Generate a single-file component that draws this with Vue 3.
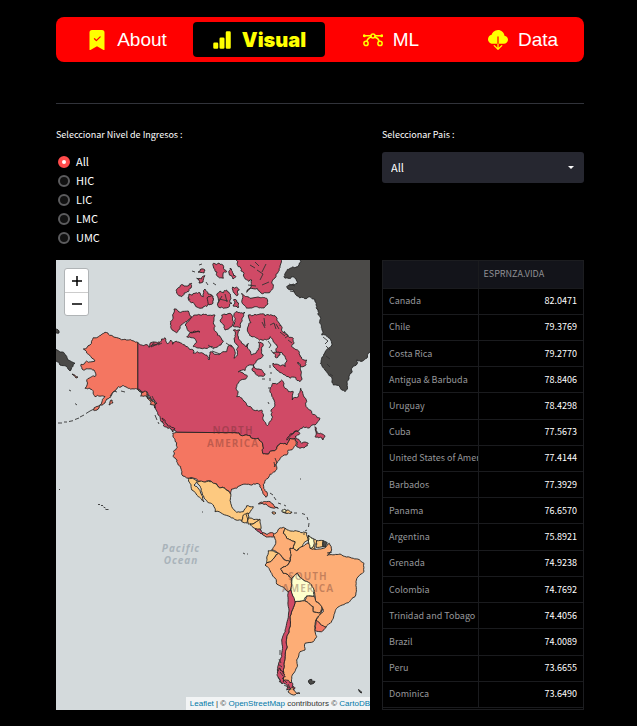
<script setup>
import { ref } from 'vue'

const tabs = [
  { id: 'about', label: 'About' },
  { id: 'visual', label: 'Visual' },
  { id: 'ml', label: 'ML' },
  { id: 'data', label: 'Data' },
]
const activeTab = ref('visual')

const incomes = ['All', 'HIC', 'LIC', 'LMC', 'UMC']
const income = ref('All')
const country = ref('All')

const rows = [
  ['Canada', '82.0471'],
  ['Chile', '79.3769'],
  ['Costa Rica', '79.2770'],
  ['Antigua & Barbuda', '78.8406'],
  ['Uruguay', '78.4298'],
  ['Cuba', '77.5673'],
  ['United States of America', '77.4144'],
  ['Barbados', '77.3929'],
  ['Panama', '76.6570'],
  ['Argentina', '75.8921'],
  ['Grenada', '74.9238'],
  ['Colombia', '74.7692'],
  ['Trinidad and Tobago', '74.4056'],
  ['Brazil', '74.0089'],
  ['Peru', '73.6655'],
  ['Dominica', '73.6490'],
]

// Deterministic noise in -1..1, equal for both directions of one edge.
function noise(x, y) {
  const v = Math.sin(x * 12.9898 + y * 78.233) * 43758.5453
  return (v - Math.floor(v)) * 2 - 1
}

// Splits an edge by midpoint displacement so that coasts look natural.
function split(a, b, rough, out) {
  const dx = b[0] - a[0]
  const dy = b[1] - a[1]
  const len = Math.hypot(dx, dy)
  if (len < 2.2 || len > 40 || rough === 0) {
    out.push(b)
    return
  }
  const dir = a[0] < b[0] || (a[0] === b[0] && a[1] < b[1]) ? 1 : -1
  const k = noise(a[0] + b[0], a[1] + b[1]) * rough * dir
  const m = [(a[0] + b[0]) / 2 - dy * k, (a[1] + b[1]) / 2 + dx * k]
  split(a, m, rough, out)
  split(m, b, rough, out)
}

function outline(text, rough) {
  const pts = text.split(' ').map((p) => p.split(',').map(Number))
  const out = [pts[0]]
  pts.forEach((p, i) => split(p, pts[(i + 1) % pts.length], rough, out))
  return 'M' + out.map((p) => p[0].toFixed(1) + ' ' + p[1].toFixed(1)).join('L') + 'Z'
}

const shapes = [
  // Greenland and the far east of Russia
  ['none', 0.24, '300.7,258 372,258 372,350 366.7,358.3 351.7,368.3 349,379 345,391.7 333.3,385 325,370 325,351.7 331.7,343.3 321.7,335 318.3,315 310,296.7 296.7,295.7 286.7,286.7 297.3,283.3 284,276.7 290,268.3 299,265'],
  ['none', 0.2, '54,346 62,352 68,360 75,363.3 70,371 60,365 54,359'],
  ['none', 0.2, '54,329 59,331 59,333 54,333'],
  // Canada
  ['top', 0.22, '137.7,342.3 141.7,345 149,347.3 150,343.3 160,342.3 165,337.7 167.3,343.7 170.7,340 172.7,344.3 176,341 181.7,343.3 187.3,346.7 193.3,350 193.3,353.3 201.7,352.7 206.7,355 209,360 210,352 220,354 226.7,351.7 230,345 235,351.7 234,358.3 238.3,346.7 233.3,330 240,330 241.7,343.3 246,347 248.3,343.3 251.7,355 256.7,351.7 258.3,342.3 263.3,345 263.3,355 258.3,359 255,363.3 249.3,365 238.3,372 247.3,375.7 240.7,380 236.7,386.7 236.7,396.7 245,401.7 250.7,406.7 261.7,410 263.3,420 267.3,425.7 271.7,420 271,410 275,405 271.7,395 272.7,383.3 281.7,380 285,388.3 293.3,391.7 292.3,400 298.3,396.7 300.7,388.3 306.7,401.7 311.7,411.7 320,418.3 315,425 303.3,426.7 293.3,433.3 286.7,440 296.7,431 300,433.3 295,436.7 301.7,443.3 308.3,443.3 300,448.3 296.7,446.7 295,438.3 290,438.3 286.7,445 278.3,445 271.7,451 263.3,454 262.7,445 258.3,438.3 246.7,435 236,432.7 176.7,432.3 173.3,428.3 166,425 160,416.7 155,408 156.7,403.3 146.7,391.7 137.7,389.3'],
  ['top', 0.2, '174,309 188.3,311 191.7,316.7 183.3,323.3 176.7,332.7 170.7,326.7 173,317'],
  ['top', 0.22, '191.7,317.7 203,314 215,315 215,326.7 223.3,341.7 210,346.7 198,348 193.3,346.7 196.7,342.3 186.7,336.7 200,332 188.3,331 185,325'],
  ['top', 0.3, '176.7,293.3 183.3,285 191.7,283.3 188.3,291.7 181.7,296.7'],
  ['top', 0.3, '189,294 195,293.3 203.3,296.7 205,289 208,294 213.3,298.3 208,304 200,308.3 190,301.7'],
  ['top', 0.3, '196.7,278.3 205,275.7 203,282 199,283'],
  ['top', 0.3, '198,272 201,269 205,270 204,273'],
  ['top', 0.3, '213.3,263.3 219,263 226.7,271.7 223.3,278.3 217,272'],
  ['top', 0.3, '230,268.3 236,276.7 233,279 229,273'],
  ['top', 0.3, '235,258 283,258 280,266 278.3,271.7 275,278 271.7,283.3 271.7,290 260,291.7 246.7,292.3 251.7,280 243.3,275 238.3,266.7'],
  ['top', 0.14, '241.7,293.3 250,298.3 258,297 266.7,298.3 268,304 264,308 246.7,308.3 241.7,301.7'],
  ['top', 0.35, '216.7,295 220,291 226.7,290 230,300 223.3,308.3 218,303'],
  ['top', 0.3, '232.7,287 239.3,290 238,295 234,293'],
  ['top', 0.3, '233.3,300 238.5,303 238,308 233,306'],
  ['top', 0.3, '207,298 213,296 213,303 209,305'],
  ['top', 0.25, '221.7,315 230,313.3 232.5,320 231.7,326.7 225,330 220,321'],
  ['top', 0.2, '236,311.7 245,312.3 241.7,321.7 240,328 233,326 235,321.7'],
  ['top', 0.28, '248.3,315 255,314.3 265,316 268,314.5 276.7,320 281.7,326.7 293.3,338.3 291.7,346.7 299,354 306.7,360 301.7,366.7 298,362 301,371 300,381.7 290,378.3 276.7,370 273,363 285,366.7 283.3,355 275,343.3 270,336.7 262,340 253.3,336.7 247.3,330'],
  ['top', 0.25, '253.3,365 259,369 265,375 256.7,375 252,370'],
  ['top', 0.3, '273,353 279,352 280,355 275,357'],
  ['top', 0.25, '315,426.7 317,433 325,436.7 323,440 315,436.7'],
  ['top', 0.3, '162,418 167,424 175,429 173,432 166,427'],
  // United States
  ['high', 0.22, '137.7,342.3 128.3,340 115,337.3 105,332.3 93.3,337.7 90,345 83.3,349 89.3,355 95,361 86.7,361 81,364.3 83.3,370 94,370 95,376.7 86.7,381 85,388.3 93.3,391.7 95,396.7 105,396.7 100,405 93.3,410 98,409 105,403 111.7,395 118.3,386.7 128.3,388.3 137.7,389.3'],
  ['high', 0.3, '137.7,389.3 146.7,391.7 156.7,403.3 155,408 148,399'],
  ['high', 0.22, '176.7,432.3 236,432.7 246.7,435 258.3,438.3 262.7,445 263.3,454 271.7,451 278.3,445 286.7,445 290,438.3 295,438.3 296,445 288.3,450 286.7,455 280,458.3 276.7,466.7 275,471.7 266.7,479 263.3,484.3 266.7,491.7 266,497.3 262.7,491.7 260,485 246.7,484.3 240,485.7 231.7,489 230.7,494.3 225,488.3 219.3,487.7 211.7,481.7 198.3,481.7 188.3,478.3 181.7,474.3 178.3,465 173.3,456.7 174.3,438.3 172.7,433.3'],
  ['high', 0.3, '110,402 112,400 113,403 109,405'],
  ['high', 0.3, '72,374 78,377 76,378'],
  // Caribbean
  ['high', 0.2, '258.3,504 266.7,501.7 273,504 278.3,508.3 273,508 266,504'],
  ['gold', 0.2, '287,510 292,512 287,513.5 283,512'],
  ['pale', 0.2, '282,510 285,509 286,512.5 282,512'],
  ['mid', 0.2, '272,512 276,513 273,514'],
  // Mexico and Central America
  ['gold', 0.14, '188.3,478.3 198.3,481.7 211.7,481.7 219.3,487.7 225,488.3 230.7,494.3 231.7,506.7 236.7,512.3 243.3,511.7 246.7,505.7 253.3,506.7 249.3,513.3 243.3,516.7 242.7,521 230,516.7 215,511.7 213.3,505 201.7,491.7 196.7,481.7 194,485 201.7,495 204,501.7 196.7,495 190,483.3'],
  ['gold', 0.1, '243.3,515 248,513 249,517 247,523 241.7,521.7'],
  ['gold', 0.14, '248,518 260,519.3 253,524 248,524'],
  ['gold', 0.14, '260,519.3 260.7,529.3 254,528 250,524.5 253,524'],
  ['top', 0.12, '255,529 260,529 262.7,532.7 261,534'],
  ['high', 0.16, '262.7,532.7 267,534.5 273.3,533 276,536 272,537 266,537 262,534'],
  // South America
  ['gold', 0.14, '285,528.3 295,530.7 306.7,532.7 308.3,540 301.7,546.7 296.7,550.7 293.3,548.3 295,541.7 286.7,538.3 283.3,533.3'],
  ['gold', 0.12, '308.3,535 316.7,540.7 315,549.3 310,548.3 308.3,540'],
  ['pale', 0.12, '308.3,536 314,539 313,547 310.5,548.3 308.3,541'],
  ['gold', 0.1, '316.7,540.7 323.3,540.7 322.7,546.7 316,547.3'],
  ['none', 0.1, '323.3,540.7 327.3,542.7 325.7,547.3 322.7,546.7'],
  ['gold', 0.12, '268.3,550.7 278.3,553.3 271.7,560.7 266.7,562.7 266.7,558'],
  ['mid', 0.14, '273.3,535 278,530 283.3,527.3 285,528.3 283.3,533.3 286.7,538.3 295,541.7 293.3,548.3 290,548.3 290,561.7 281.7,556.7 271.7,550 275,545 275,539'],
  ['mid', 0.12, '266.7,562.7 271.7,560.7 278.3,553.3 281.7,556.7 290,561.7 280.7,569.3 283.3,573.3 291.7,578.3 290.7,590 288.3,591.7 276.7,584 271.7,573.3 265,565'],
  ['mid', 0.12, '290,548.3 293.3,548.3 296.7,550.7 301.7,546.7 308.3,542.7 310,548.3 315,549.3 325.7,547.3 329.3,543.3 331.7,550 328.3,555 340,554 353.3,558.3 364,563.3 364,571.7 356,581.7 355,596.7 348.3,602.7 336.7,608.3 333.3,618.3 326,627.3 316,620 323.3,611.7 321.7,606.7 316,601.7 314,590 303.3,580 297.3,573.3 291.7,578.3 283.3,573.3 280.7,569.3 290,561.7'],
  ['mid', 0.08, '295,601.7 305,600.7 313.3,606.7 313.3,611.7 320,612.7 322.7,609.3 316,620 315,631.7 316.7,636.7 313.3,641.7 305,643.3 305,650 300,651.7 296.7,660 297.3,666.7 291.7,676.7 291.7,682.7 283.3,681.7 285,656.7 286.7,636.7 290,616.7'],
  ['mid', 0.08, '306.7,596 314,596 316,601.7 321.7,606.7 320,612.7 313.3,611.7 313.3,606.7 305,600.7'],
  ['pale', 0.1, '291.7,578.3 297.3,573.3 303.3,580 310,583.3 314,590 314,596 306.7,596 303.3,600.7 295,601.7 290.7,590'],
  ['high', 0.08, '316,620 326,627.3 321.7,631.7 315,630.7'],
  ['top', 0.08, '288.3,591.7 290.7,590 295,601.7 290,616.7 286.7,636.7 285,656.7 283.3,681.7 279,676 277.3,670 281.7,656.7 281.7,640 286.7,623.3 288.3,606.7'],
  ['top', 0.35, '279,668 283,672 283.3,681.7 292.7,683.3 291.7,691.7 286.7,690 279.3,681.7 277.3,672'],
  ['mid', 0.2, '293,687 295,691.7 300,693.3 293.3,695 288,692'],
  ['none', 0.3, '308.3,681 315,681.5 312,684 309,683'],
  ['none', 0.3, '358.5,689.5 362,692.5 361,693'],
].map(([tone, rough, pts]) => ({ tone, d: outline(pts, rough) }))

// Island chains too small to fill.
const specks =
  'M58 423h4M64 422h3M69 421.500l4-.8M75 419.500l4-1.500M80 417l4-2M86 413.500l4-2.500M90 411l4-2' +
  'M98 504.500h2M101 505.500h2M103.500 507l2 1M105.500 509.500h3M59 489.500h1M75 403.500l2 1.500M69 390l2 1' +
  'M110 396l4-5 3 1M121 391l4 1M155 415l2 5M158 422l1 2M149 397l4 5M152 396l3 6M147 394l2 4' +
  'M270 493l3 2M274 497l2 3M278 503l3 1M284 505l2 1M294 513h3M302 513.500l3 1M307 517l1 3M309 523l-.5 4M307 530l-2 1M303 534h2' +
  'M188 297l2 3M206 282l2 3M192 271l3 1M213 283l3 2M225 294l2 8M219 299l9 2M222 296l-4 7M199 265l3-1' +
  'M257 270l6 4-3 6M266 264l-4 8M250 265l5 3M248 285l8 1M262 285l7-3M255 262l4 4' +
  'M262 322l3 6M270 325l4-2 2 6M280 332l5 4M264 318l1 8M288 340l4 3M284 331l4 5-3 2M276 324l3 5' +
  'M268 341l3 4M271 350l2 3M269 348l2-3M262 379h3M270 365v3M271 372v2M270 378v3M269 387v2M268 402l1 2' +
  'M323 337l5 4-3 3M326 346l4 4M326 356l4 3M327 364l3 3M330 374l3 2M290 291l5 1M289 284l6 2' +
  'M149 347l5-3 3 1M153 346l7-3M158 345l4-2M208 345l6 4M212 351l8 3M226 343l6 4' +
  'M279 659l2 4M278 664l4 3M280 672l3 4M282 678l5 5M284 685l6 3M288 684l3 6M280 650v5M278 677l4 7' +
  'M159 343l-8 4 3-5M275 458l2 5-3 4M274 462l1 5M327 553l5-1M327 556l3-4M243 553l2 1M247 554h1M246 514l2 6M300 479h1M202 512h1'
</script>

<template>
  <main class="page">
    <nav class="menu">
      <div class="menu-row">
        <a
          v-for="t in tabs"
          :key="t.id"
          href="#"
          class="tab"
          :class="{ active: t.id === activeTab }"
          @click.prevent="activeTab = t.id"
        >
          <svg class="icon" viewBox="0 0 16 16" aria-hidden="true">
            <path
              v-if="t.id === 'about'"
              fill-rule="evenodd"
              d="M2 15.500V2a2 2 0 0 1 2-2h8a2 2 0 0 1 2 2v13.500a.5.5 0 0 1-.74.439L8 13.069l-5.260 2.870A.5.5 0 0 1 2 15.500zm8.854-9.646a.5.5 0 0 0-.708-.708L7.500 7.793 6.354 6.646a.5.5 0 1 0-.708.708l1.500 1.500a.5.5 0 0 0 .708 0l3-3z"
            />
            <path
              v-else-if="t.id === 'visual'"
              d="M1 11a1 1 0 0 1 1-1h2a1 1 0 0 1 1 1v3a1 1 0 0 1-1 1H2a1 1 0 0 1-1-1v-3zm5-4a1 1 0 0 1 1-1h2a1 1 0 0 1 1 1v7a1 1 0 0 1-1 1H7a1 1 0 0 1-1-1V7zm5-5a1 1 0 0 1 1-1h2a1 1 0 0 1 1 1v12a1 1 0 0 1-1 1h-2a1 1 0 0 1-1-1V2z"
            />
            <g v-else-if="t.id === 'ml'" fill="none" stroke="currentColor" stroke-width="1.2">
              <circle cx="8" cy="4.700" r="1.600" />
              <circle cx="2.400" cy="10.700" r="1.700" />
              <circle cx="13.600" cy="10.700" r="1.700" />
              <path d="M1 4.500h5.400M9.600 4.500H15M6.700 5.600C5 6.100 3.500 7 3.100 9M9.300 5.600c1.700.5 3.200 1.400 3.600 3.400" />
              <circle class="dot" cx="1" cy="4.500" r=".6" />
              <circle class="dot" cx="15" cy="4.500" r=".6" />
            </g>
            <path
              v-else
              d="M8 0a5.530 5.530 0 0 0-3.594 1.342c-.766.66-1.321 1.520-1.464 2.383C1.266 4.095 0 5.555 0 7.318 0 9.366 1.708 11 3.781 11H7.500V5.500a.5.5 0 0 1 1 0V11h4.188C14.502 11 16 9.570 16 7.773c0-1.636-1.242-2.969-2.834-3.194C12.923 1.999 10.690 0 8 0zm-.354 15.854a.5.5 0 0 0 .708 0l3-3a.5.5 0 0 0-.708-.708L8.500 14.293V11h-1v3.293l-2.146-2.147a.5.5 0 0 0-.708.708l3 3z"
            />
          </svg>
          <span>{{ t.label }}</span>
        </a>
      </div>
    </nav>

    <hr class="rule" />

    <div class="grid">
      <fieldset class="group">
        <legend class="label">Seleccionar Nivel de Ingresos :</legend>
        <label v-for="i in incomes" :key="i" class="option">
          <input v-model="income" type="radio" name="income" :value="i" />
          <span>{{ i }}</span>
        </label>
      </fieldset>

      <div class="group">
        <label class="label" for="country">Seleccionar Pais :</label>
        <div class="picker">
          <select id="country" v-model="country">
            <option>All</option>
            <option v-for="r in rows" :key="r[0]">{{ r[0] }}</option>
          </select>
          <svg class="caret" viewBox="0 0 6 3" aria-hidden="true"><path d="M0 0h6L3 3z" /></svg>
        </div>
      </div>

      <section class="map">
        <svg class="world" viewBox="56 260 314 450" preserveAspectRatio="xMidYMid slice">
          <path v-for="(s, n) in shapes" :key="n" class="land" :class="s.tone" :d="s.d" />
          <path class="specks" :d="specks" />
          <g class="continent">
            <text x="233" y="434">NORTH</text>
            <text x="233" y="447">AMERICA</text>
            <text x="308" y="580">SOUTH</text>
            <text x="308" y="592">AMERICA</text>
          </g>
          <g class="ocean">
            <text x="181" y="552">Pacific</text>
            <text x="181" y="564">Ocean</text>
          </g>
        </svg>
        <div class="zoom">
          <button type="button" aria-label="Zoom in">
            <svg viewBox="0 0 10 10"><path d="M0 5h10M5 0v10" /></svg>
          </button>
          <button type="button" aria-label="Zoom out">
            <svg viewBox="0 0 10 10"><path d="M0 5h10" /></svg>
          </button>
        </div>
        <div class="credit">
          <a href="#">Leaflet</a> | © <a href="#">OpenStreetMap</a> contributors © <a href="#">CartoDB</a>
        </div>
      </section>

      <div class="sheet">
        <table>
          <thead>
            <tr><th></th><th>ESPRNZA.VIDA</th></tr>
          </thead>
          <tbody>
            <tr v-for="r in rows" :key="r[0]">
              <td class="name">{{ r[0] }}</td>
              <td class="value">{{ r[1] }}</td>
            </tr>
          </tbody>
        </table>
      </div>
    </div>
  </main>
</template>

<style>
body {
  background: #000;
}
</style>

<style scoped>
* {
  box-sizing: border-box;
}
.page {
  padding: 17px 53px 16px 56px;
  color: #fff;
  font-family: "Noto Sans CJK SC", "Noto Sans", sans-serif;
}
.menu {
  padding: 5px;
  border-radius: 8px;
  background: #f00;
}
.menu-row {
  display: grid;
  grid-template-columns: repeat(4, 1fr);
  margin-right: -10px;
}
.tab {
  display: flex;
  align-items: center;
  justify-content: center;
  gap: 10px;
  height: 35px;
  border-radius: 4px;
  color: #fff;
  font: 19px/24px "Liberation Sans", sans-serif;
  text-decoration: none;
}
.tab.active {
  background: #000;
  color: #ff0;
  font-family: Inter, sans-serif;
  font-size: 20px;
  font-weight: 900;
}
.icon {
  width: 20px;
  height: 20px;
  color: #ff0;
  fill: currentColor;
}
.dot {
  fill: currentColor;
}
.rule {
  height: 1px;
  margin: 41px 0 23px;
  border: 0;
  background: #31333a;
}
.grid {
  display: grid;
  grid-template-columns: 314fr 202fr;
  gap: 13px 12px;
}
.group {
  min-width: 0;
  margin: 0;
  padding: 0;
  border: 0;
}
.label {
  display: block;
  margin-bottom: 9px;
  padding: 0;
  font-size: 9px;
  line-height: 16px;
}
.option {
  display: flex;
  align-items: center;
  gap: 6px;
  height: 19px;
  padding-left: 2px;
  font-size: 11px;
  line-height: 19px;
}
.option input {
  appearance: none;
  width: 12px;
  height: 12px;
  margin: 0;
  border: 2px solid #5c5c5e;
  border-radius: 50%;
  background: #111;
}
.option input:checked {
  border: 4px solid #ff4b4b;
  background: #fff;
}
.picker {
  position: relative;
}
.picker select {
  display: block;
  appearance: none;
  width: 100%;
  height: 31px;
  padding: 0 24px 1px 9px;
  border: 0;
  border-radius: 3px;
  background: #262730;
  color: #fff;
  font: 11px/16px "Noto Sans CJK SC", "Noto Sans", sans-serif;
}
.caret {
  position: absolute;
  top: 14px;
  right: 10px;
  width: 6px;
  height: 3px;
  fill: #fafafa;
}
.map {
  position: relative;
  height: 450px;
  overflow: hidden;
  background: #d4dadc;
}
.world {
  display: block;
  width: 100%;
  height: 100%;
}
.land {
  stroke: #222;
  stroke-width: 0.9;
  stroke-linejoin: round;
}
.specks {
  fill: none;
  stroke: #333;
  stroke-width: 0.9;
}
.top { fill: #d04a66; }
.high { fill: #f47661; }
.mid { fill: #fdad76; }
.gold { fill: #fdc980; }
.pale { fill: #ffffcc; }
.none { fill: #4b4a48; }
.continent {
  fill: #5a2a2a;
  fill-opacity: 0.35;
  font: 700 10px "Open Sans", sans-serif;
  letter-spacing: 1px;
  text-anchor: middle;
}
.ocean {
  fill: #a9b3ba;
  font: italic 700 10px "Open Sans", sans-serif;
  letter-spacing: 1px;
  text-anchor: middle;
}
.zoom {
  position: absolute;
  top: 8px;
  left: 8px;
  width: 25px;
  border: 1px solid #b0b4b6;
  border-radius: 3px;
  background: #fff;
}
.zoom button {
  display: flex;
  align-items: center;
  justify-content: center;
  width: 100%;
  height: 23px;
  padding: 0;
  border: 0;
  background: none;
}
.zoom button + button {
  border-top: 1px solid #ccc;
}
.zoom svg {
  width: 10px;
  height: 10px;
  fill: none;
  stroke: #000;
  stroke-width: 1.5;
}
.credit {
  position: absolute;
  right: 0;
  bottom: 0;
  padding: 0 0 0 4px;
  background: rgba(255, 255, 255, 0.7);
  color: #333;
  font: 8px/13px "Liberation Sans", sans-serif;
  white-space: nowrap;
}
.credit a {
  color: #0078a8;
  text-decoration: none;
}
.sheet {
  min-width: 0;
  overflow: hidden;
  border: 1px solid #1c1d20;
}
table {
  width: 100%;
  height: 447px;
  border-collapse: collapse;
  table-layout: fixed;
  font-size: 9px;
  line-height: 14px;
}
th,
td {
  overflow: hidden;
  padding: 0 6px;
  border-bottom: 1px solid #1a1b1e;
  white-space: nowrap;
}
th:first-child,
.name {
  width: 95px;
  border-right: 1px solid #1a1b1e;
}
th {
  height: 27px;
  padding-left: 5px;
  background: #13141a;
  color: #8f9094;
  font-weight: 400;
  text-align: left;
}
.name {
  padding-right: 0;
  color: #96979a;
}
.value {
  color: #fff;
  text-align: right;
}
</style>
